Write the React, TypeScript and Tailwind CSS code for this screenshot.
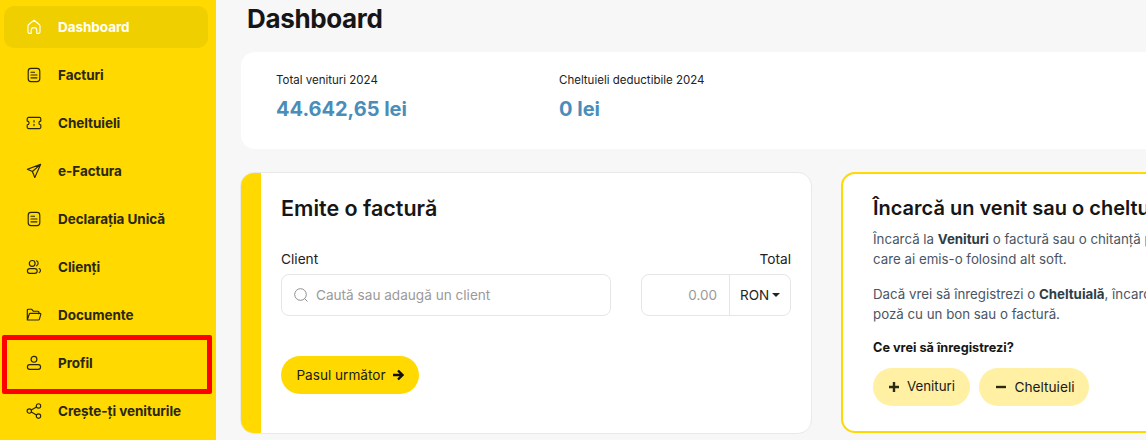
import React from "react";

const S = ({ children, c = "" }: { children: React.ReactNode; c?: string }) => (
  <svg viewBox="0 0 16 16" fill="none" stroke="currentColor" strokeWidth="1.15" strokeLinecap="round" strokeLinejoin="round" className={"w-[16px] h-[16px] " + c}>{children}</svg>
);

const icons: Record<string, React.ReactNode> = {
  home: <S><path d="M2 13V6.8c0-.4.2-.7.4-1L8 1.2l5.6 4.6c.3.3.4.6.4 1V13a1.4 1.4 0 0 1-1.4 1.4h-1.8v-3a2.8 2.8 0 0 0-5.6 0v3H3.4A1.4 1.4 0 0 1 2 13z" /></S>,
  doc: <S><rect x="2.2" y="1.4" width="11.6" height="13.2" rx="2.8" /><path d="M5 5.2h3.5M5 8h6M5 10.8h6" /></S>,
  ticket: <S><path d="M2.6 2.4h10.8a1.4 1.4 0 0 1 1.4 1.4v2.3a1.9 1.9 0 0 0 0 3.8v2.3a1.4 1.4 0 0 1-1.4 1.4H2.6a1.4 1.4 0 0 1-1.4-1.4V9.9a1.9 1.9 0 0 0 0-3.8V3.8a1.4 1.4 0 0 1 1.4-1.4z" /><path d="M8 5.6v1.4M8 9.2v1.4" /></S>,
  send: <S><path d="M14.6 1.4 1.4 6.2l5 2.3 2.4 6zM14.6 1.4 6.4 8.5" /></S>,
  users: <S><circle cx="6.2" cy="4.4" r="2.9" /><rect x="1.4" y="9.6" width="9.8" height="4.8" rx="2.4" /><path d="M10.6 1.8a2.8 2.8 0 0 1 0 5M13.2 9.6c1.7.8 1.7 3.2 0 4" /></S>,
  folder: <S><path d="M1.3 13V3.2a1 1 0 0 1 1-1h3.3l1.6 2h4.7a1 1 0 0 1 1 1v1.6M1.3 13l2-6a1 1 0 0 1 .9-.7h9.8a.8.8 0 0 1 .8 1l-1.4 4.9a1.2 1.2 0 0 1-1.1.8z" /></S>,
  user: <S><circle cx="8" cy="4.3" r="2.9" /><rect x="1.4" y="9.6" width="13.2" height="4.8" rx="2.4" /></S>,
  share: <S><circle cx="3.3" cy="8" r="2.2" /><circle cx="12.5" cy="2.9" r="2.2" /><circle cx="12.5" cy="13.1" r="2.2" /><path d="M5.3 7 10.5 4M5.3 9l5.2 3" /></S>,
};

const items = [
  ["Dashboard", "home"],
  ["Facturi", "doc"],
  ["Cheltuieli", "ticket"],
  ["e-Factura", "send"],
  ["Declarația Unică", "doc"],
  ["Clienți", "users"],
  ["Documente", "folder"],
  ["Profil", "user"],
  ["Crește-ți veniturile", "share"],
];

export default function App() {
  return (
    <div className="relative flex h-[440px] w-[1146px] overflow-hidden bg-[#f7f7f7] font-['Inter','Lato',sans-serif] text-[#1a1a1a]">
      <aside className="flex w-[216px] shrink-0 flex-col bg-[#ffd900] pl-[4px] pr-[8px] pt-[6px]">
        {items.map(([label, icon], i) => (
          <div
            key={label}
            className={
              "flex h-[42px] shrink-0 items-center gap-[16px] rounded-[10px] pl-[22px] text-[13.5px] font-bold tracking-[-0.05px] " +
              (i === 0 ? "bg-[#f0cf00] text-white" : "text-[#2a2611]") +
              (i < items.length - 1 ? " mb-[6px]" : "")
            }
          >
            {icons[icon]}
            <span className="whitespace-nowrap">{label}</span>
          </div>
        ))}
      </aside>

      <main className="flex min-w-0 flex-1 flex-col pl-[24px] pt-[3px]">
        <h1 className="ml-[7px] text-[26px] font-bold leading-[31px] tracking-[-0.35px] text-[#161616]">Dashboard</h1>
        <section className="mt-[18px] ml-[1px] flex h-[97px] w-[940px] shrink-0 rounded-l-[14px] bg-white pl-[35px] pt-[20px]">
          <div className="w-[283px]">
            <div className="text-[11.5px] leading-[16px] text-[#222]">Total venituri 2024</div>
            <div className="mt-[8px] text-[20px] font-bold leading-[26px] text-[#4a8db9]">44.642,65 lei</div>
          </div>
          <div>
            <div className="text-[11.5px] leading-[16px] text-[#222]">Cheltuieli deductibile 2024</div>
            <div className="mt-[8px] text-[20px] font-bold leading-[26px] text-[#4a8db9]">0 lei</div>
          </div>
        </section>

        <div className="mt-[23px] flex gap-[29px]">
          <section className="flex h-[262px] w-[572px] shrink-0 overflow-hidden rounded-[14px] border border-[#e9e9e9] bg-white">
            <div className="w-[20px] shrink-0 bg-[#ffd900]" />
            <div className="flex-1 pl-[20px] pr-[20px] pt-[21px]">
              <h2 className="text-[21.5px] font-semibold leading-[28px] text-[#161616]">Emite o factură</h2>
              <div className="mt-[28px] flex justify-between text-[13.7px] leading-[18px] text-[#222]">
                <span>Client</span>
                <span>Total</span>
              </div>
              <div className="mt-[6px] flex justify-between">
                <div className="flex h-[42px] w-[330px] items-center gap-[7px] rounded-[8px] border border-[#e6e6e6] pl-[11px] text-[13.6px] text-[#9a9a9a]">
                  <svg viewBox="0 0 16 16" fill="none" stroke="#8f8f8f" strokeWidth="1" className="h-[16px] w-[16px]"><circle cx="7.5" cy="7.5" r="5.8" /><path d="m11.8 11.8 2.4 2.4" strokeLinecap="round" /></svg>
                  <span>Caută sau adaugă un client</span>
                </div>
                <div className="flex h-[42px] w-[150px] rounded-[8px] border border-[#e6e6e6] text-[13.5px]">
                  <div className="flex w-[88px] items-center justify-end border-r border-[#e6e6e6] pr-[12px] text-[#9a9a9a]">0.00</div>
                  <div className="flex flex-1 items-center pl-[10px] text-[#222]">
                    RON
                    <svg viewBox="0 0 8 4" className="ml-[3px] h-[4px] w-[8px]" fill="#222"><path d="M0 0h8L4 4z" /></svg>
                  </div>
                </div>
              </div>
              <button className="mt-[40px] flex h-[38px] w-[138px] items-center justify-center gap-[6px] rounded-full bg-[#ffd900] text-[13.6px] text-[#1a1a1a]">
                Pasul următor
                <svg viewBox="0 0 12 12" fill="none" stroke="#111" strokeWidth="2.4" className="h-[12px] w-[12px]"><path d="M1 6h9M6 1.5 10.5 6 6 10.5" /></svg>
              </button>
            </div>
          </section>

          <section className="h-[261px] w-[500px] shrink-0 rounded-[14px] border-2 border-[#ffd900] bg-white pl-[30px] pt-[21px]">
            <h2 className="whitespace-nowrap text-[20px] font-semibold leading-[26px] text-[#161616]">Încarcă un venit sau o cheltuială</h2>
            <p className="mt-[8px] whitespace-nowrap text-[13.3px] leading-[20px] text-[#4b5563]">
              Încarcă la <b className="font-bold text-[#2f3e46]">Venituri</b> o factură sau o chitanță pe<br />care ai emis-o folosind alt soft.
            </p>
            <p className="mt-[15px] whitespace-nowrap text-[13.3px] leading-[20px] text-[#4b5563]">
              Dacă vrei să înregistrezi o <b className="font-bold text-[#2f3e46]">Cheltuială</b>, încarcă o<br />poză cu un bon sau o factură.
            </p>
            <div className="mt-[15px] text-[12.7px] font-bold leading-[18px] text-[#161616]">Ce vrei să înregistrezi?</div>
            <div className="mt-[11px] flex gap-[9px]">
              <button className="flex h-[38px] w-[97px] items-center justify-center gap-[7px] rounded-full bg-[#fff0a3] text-[13.3px]">
                <svg viewBox="0 0 12 12" stroke="#2a2a10" strokeWidth="2.4" className="h-[12px] w-[12px]"><path d="M6 1v10M1 6h10" /></svg>
                Venituri
              </button>
              <button className="flex h-[38px] w-[110px] items-center justify-center gap-[7px] rounded-full bg-[#fff0a3] pl-[2px] text-[13.7px]">
                <svg viewBox="0 0 12 12" stroke="#2a2a10" strokeWidth="2.4" className="h-[12px] w-[12px]"><path d="M1 6h10" /></svg>
                Cheltuieli
              </button>
            </div>
          </section>
        </div>
      </main>

      <div className="pointer-events-none absolute left-[2px] top-[335px] h-[59px] w-[210px] rounded-[2px] border-[5px] border-[#ff0000]" />
    </div>
  );
}
